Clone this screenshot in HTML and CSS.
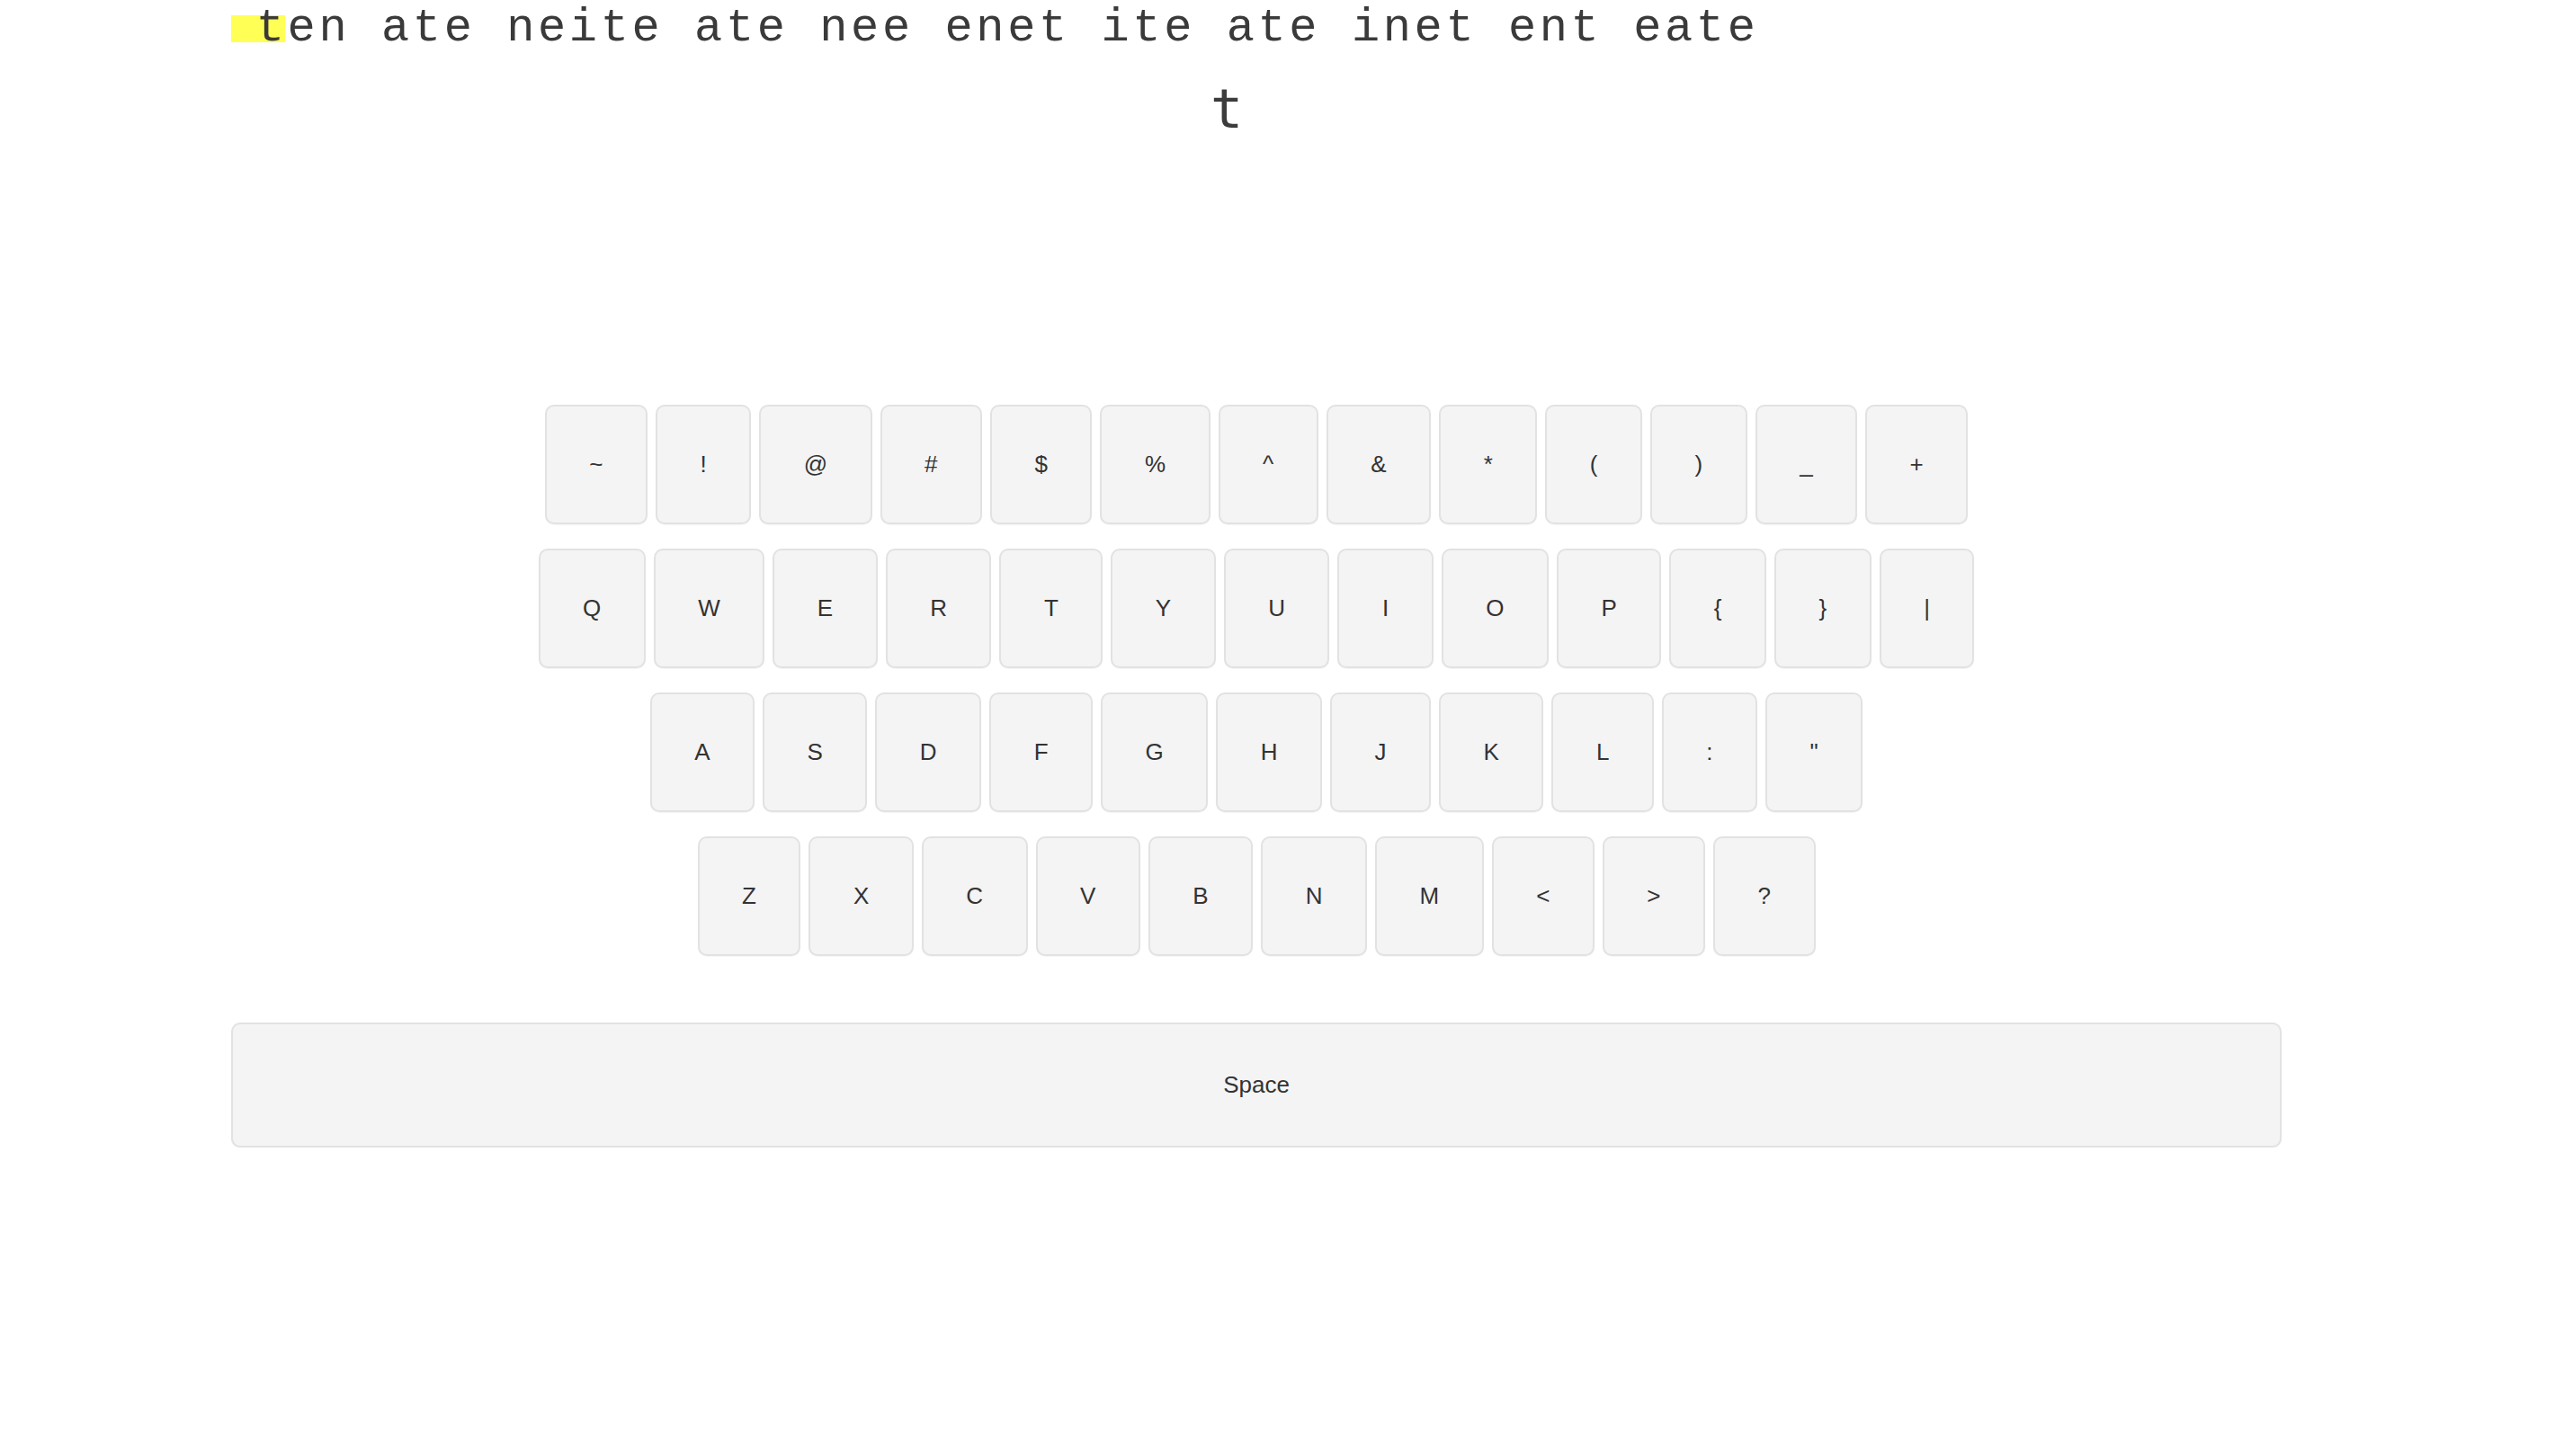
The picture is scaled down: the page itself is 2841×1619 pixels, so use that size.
FILE: index.html
```html
<!DOCTYPE html>
<html lang="en">
<head>
<meta charset="utf-8">
<title>Typing practice</title>
<link rel="stylesheet" href="styles.css">
</head>
<body>
<main class="app">
  <div class="prompt"><span class="highlight"></span><span class="prompt-text"> ten ate neite ate nee enet ite ate inet ent eate</span></div>
  <div class="current">t</div>

  <section class="keyboard">
    <div class="row">
      <div class="key">~</div><div class="key">!</div><div class="key">@</div><div class="key">#</div><div class="key">$</div><div class="key">%</div><div class="key">^</div><div class="key">&amp;</div><div class="key">*</div><div class="key">(</div><div class="key">)</div><div class="key">_</div><div class="key">+</div>
    </div>
    <div class="row">
      <div class="key">Q</div><div class="key">W</div><div class="key">E</div><div class="key">R</div><div class="key">T</div><div class="key">Y</div><div class="key">U</div><div class="key">I</div><div class="key">O</div><div class="key">P</div><div class="key">{</div><div class="key">}</div><div class="key">|</div>
    </div>
    <div class="row">
      <div class="key">A</div><div class="key">S</div><div class="key">D</div><div class="key">F</div><div class="key">G</div><div class="key">H</div><div class="key">J</div><div class="key">K</div><div class="key">L</div><div class="key">:</div><div class="key">"</div>
    </div>
    <div class="row">
      <div class="key">Z</div><div class="key">X</div><div class="key">C</div><div class="key">V</div><div class="key">B</div><div class="key">N</div><div class="key">M</div><div class="key">&lt;</div><div class="key">&gt;</div><div class="key">?</div>
    </div>
    <div class="space-row">
      <div class="key space">Space</div>
    </div>
  </section>
</main>
</body>
</html>
```

FILE: styles.css
```css
html, body {
  margin: 0;
  padding: 0;
  background: #ffffff;
}

body {
  color: #333333;
  font-family: "Liberation Sans", Arial, sans-serif;
}

.app {
  width: 2280px;
  margin-left: 257px;
}

.prompt {
  position: relative;
  height: 64px;
  font-family: "Liberation Mono", "Courier New", monospace;
  font-size: 52px;
  line-height: 64px;
  letter-spacing: 3.6px;
  color: #3a3a3a;
  white-space: nowrap;
  margin-left: -7px;
}

.highlight {
  position: absolute;
  left: 7px;
  top: 17px;
  width: 60px;
  height: 30px;
  background: #ffff55;
}

.prompt-text {
  position: relative;
  white-space: pre;
}

.current {
  margin-top: 22px;
  height: 70px;
  font-family: "DejaVu Sans Mono", monospace;
  font-size: 60px;
  line-height: 70px;
  text-align: center;
  padding-right: 66px;
  color: #3c3c3c;
}

.keyboard {
  margin-top: 294px;
  display: flex;
  flex-direction: column;
  row-gap: 27px;
}

.row {
  display: flex;
  justify-content: center;
  gap: 9px;
}

.key {
  box-sizing: border-box;
  height: 133px;
  padding: 0 47.5px;
  display: flex;
  align-items: center;
  justify-content: center;
  background: #f4f4f4;
  border: 2px solid #e2e2e2;
  border-radius: 10px;
  box-shadow: 0 1px 1px rgba(0, 0, 0, 0.04);
  font-size: 26px;
  color: #333333;
  white-space: pre;
}

.space-row {
  margin-top: 47px;
  display: flex;
}

.key.space {
  flex: 1;
  height: 139px;
}
```
